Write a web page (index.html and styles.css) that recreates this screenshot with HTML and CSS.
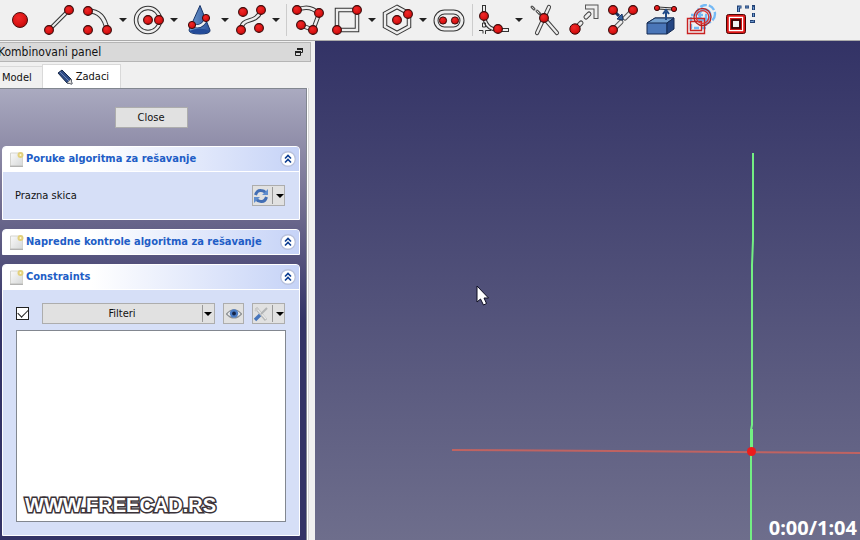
FILE: index.html
```html
<!DOCTYPE html>
<html lang="sr-Latn">
<head>
<meta charset="utf-8">
<meta name="viewport" content="width=device-width, initial-scale=1">
<title>FreeCAD</title>
<link rel="stylesheet" href="styles.css">
</head>
<body>
<svg class="defs" aria-hidden="true">
  <defs>
    <radialGradient id="red" cx=".4" cy=".35" r=".7"><stop offset="0" stop-color="#ef2929"/><stop offset=".6" stop-color="#dd1515"/><stop offset="1" stop-color="#b80808"/></radialGradient>
    <linearGradient id="blue" x1="0" x2="1"><stop offset="0" stop-color="#729fcf"/><stop offset="1" stop-color="#2c529c"/></linearGradient>
    <linearGradient id="paper" x1="0" x2="1" y1="0" y2="1"><stop offset="0" stop-color="#fafafa"/><stop offset="1" stop-color="#d6d8d8"/></linearGradient>
    <g id="dot"><circle r="4.400" fill="url(#red)" stroke="#3c0a0a" stroke-width="1.100"/></g>
    <symbol id="doc" viewBox="0 0 14 15"><path d="M.5 1h12v13H.5z" fill="url(#paper)" stroke="#d5d5d0"/><path d="M0 14.300h13" stroke="#a5a5a5"/><circle cx="10.500" cy="3" r="2" fill="#fff9d8" stroke="#e3d07b" stroke-width="2"/></symbol>
    <symbol id="chevrons" viewBox="0 0 16 16"><circle cx="8" cy="8" r="7.300" fill="#fff" stroke="#b9c2dd" stroke-width="1.400"/><path d="M5 7.500l3-3 3 3M5 11.500l3-3 3 3" fill="none" stroke="#0b3d91" stroke-width="1.600"/></symbol>
    <symbol id="caret" viewBox="0 0 8 4"><path d="M0 0h8L4 4z"/></symbol>
  </defs>
</svg>

<header class="toolbar" role="toolbar" aria-label="Sketcher">
  <button class="tool" aria-label="Point"><svg viewBox="0 0 32 32"><circle cx="16" cy="16" r="7.500" fill="url(#red)" stroke="#4a1010"/></svg></button>
  <button class="tool" aria-label="Line"><svg viewBox="0 0 32 32"><path d="M6 26L26 6" stroke="#333" stroke-width="4"/><path d="M6 26L26 6" stroke="#eee" stroke-width="2"/><use href="#dot" x="6" y="26"/><use href="#dot" x="26" y="6"/></svg></button>
  <button class="tool menu" aria-label="Arc"><svg viewBox="0 0 32 32"><path d="M6 7Q22 7 25 26" fill="none" stroke="#333" stroke-width="5"/><path d="M6 7Q22 7 25 26" fill="none" stroke="#eee" stroke-width="3"/><use href="#dot" x="6" y="7"/><use href="#dot" x="25" y="26"/><use href="#dot" x="6" y="26"/></svg><svg class="caret"><use href="#caret"/></svg></button>
  <button class="tool menu" aria-label="Circle"><svg viewBox="0 0 32 32"><circle cx="15" cy="16" r="12" fill="none" stroke="#333" stroke-width="4.500"/><circle cx="15" cy="16" r="12" fill="none" stroke="#eee" stroke-width="2.500"/><use href="#dot" x="15" y="16"/><use href="#dot" x="26" y="16"/></svg><svg class="caret"><use href="#caret"/></svg></button>
  <button class="tool menu" aria-label="Conic"><svg viewBox="0 0 32 32"><path d="M16 1.500L26 26q1 4-10 4T5 26z" fill="url(#blue)" stroke="#173368"/><path d="M5 27q11-5 21 0-3 3-10 3T5 27z" fill="#234b99"/><path d="M8 21q10 4 14-6" fill="none" stroke="#173368" stroke-width="4"/><path d="M8 21q10 4 14-6" fill="none" stroke="#eee" stroke-width="2.500"/><circle cx="8" cy="21" r="3.600" fill="url(#red)" stroke="#3c0a0a"/><circle cx="22" cy="14" r="3.600" fill="url(#red)" stroke="#3c0a0a"/></svg><svg class="caret"><use href="#caret"/></svg></button>
  <button class="tool menu" aria-label="B-spline"><svg viewBox="0 0 32 32"><path d="M6 26C7 12 20 21 26 7" fill="none" stroke="#333" stroke-width="4.500"/><path d="M6 26C7 12 20 21 26 7" fill="none" stroke="#eee" stroke-width="2.500"/><use href="#dot" x="6" y="26"/><use href="#dot" x="26" y="6"/><use href="#dot" x="8" y="8"/><use href="#dot" x="24" y="24"/></svg><svg class="caret"><use href="#caret"/></svg></button>
  <span class="divider"></span>
  <button class="tool" aria-label="Polyline"><svg viewBox="0 0 32 32"><path d="M5 6Q18 0 27 10L21 26 9 21" fill="none" stroke="#333" stroke-width="4.500"/><path d="M5 6Q18 0 27 10L21 26 9 21" fill="none" stroke="#eee" stroke-width="2.500"/><use href="#dot" x="5" y="6"/><use href="#dot" x="27" y="9"/><use href="#dot" x="21" y="26"/><use href="#dot" x="9" y="21"/></svg></button>
  <button class="tool menu" aria-label="Rectangle"><svg viewBox="0 0 32 32"><path d="M6 6h20v20H6z" fill="none" stroke="#333" stroke-width="4.500"/><path d="M6 6h20v20H6z" fill="none" stroke="#eee" stroke-width="2.500"/><use href="#dot" x="26" y="6"/><use href="#dot" x="6" y="26"/></svg><svg class="caret"><use href="#caret"/></svg></button>
  <button class="tool menu" aria-label="Polygon"><svg viewBox="0 0 32 32"><path d="M15 3l12 6.500v13L15 29 3 22.500v-13z" fill="none" stroke="#333" stroke-width="4.500"/><path d="M15 3l12 6.500v13L15 29 3 22.500v-13z" fill="none" stroke="#eee" stroke-width="2.500"/><use href="#dot" x="15" y="16"/><use href="#dot" x="26" y="10"/></svg><svg class="caret"><use href="#caret"/></svg></button>
  <button class="tool" aria-label="Slot"><svg viewBox="0 0 32 32"><rect x="3" y="8" width="26" height="17" rx="8.500" fill="none" stroke="#333" stroke-width="5"/><rect x="3" y="8" width="26" height="17" rx="8.500" fill="none" stroke="#eee" stroke-width="3"/><circle cx="10" cy="16.500" r="3.600" fill="url(#red)" stroke="#3c0a0a"/><circle cx="22" cy="16.500" r="3.600" fill="url(#red)" stroke="#3c0a0a"/></svg></button>
  <span class="divider"></span>
  <button class="tool menu" aria-label="Fillet"><svg viewBox="0 0 32 32"><path d="M6 1v10Q7 25 20 26h11" fill="none" stroke="#333" stroke-width="4"/><path d="M6 2v9Q7 25 20 26h10" fill="none" stroke="#eee" stroke-width="2"/><path d="M4.500 19v4h3v-4zM1 26.500h4v3M7.500 30v-3.500H13" fill="none" stroke="#333"/><use href="#dot" x="6" y="12"/><use href="#dot" x="20" y="25"/></svg><svg class="caret"><use href="#caret"/></svg></button>
  <button class="tool" aria-label="Trim"><svg viewBox="0 0 32 32"><g fill="none" stroke-linecap="round"><path d="M20 3L8 29M15 14l13 15" stroke="#444" stroke-width="4.200"/><path d="M20 3L8 29M15 14l13 15" stroke="#eee" stroke-width="2.200"/><path d="M3 3l2 2M8 7l3 3" stroke="#555" stroke-width="3"/><path d="M3.500 3.500l1 1M8 7l2 2" stroke="#ddd"/></g><use href="#dot" x="15" y="14"/></svg></button>
  <button class="tool" aria-label="Extend"><svg viewBox="0 0 32 32"><path d="M10 22l3-3M18 13l3-3" stroke="#444" stroke-width="5" stroke-linecap="round"/><path d="M10 22l3-3M18 13l3-3" stroke="#eee" stroke-width="3" stroke-linecap="round"/><path d="M17 3h11v12" fill="none" stroke="#555" stroke-width="5"/><path d="M18 3h10v11" fill="none" stroke="#eee" stroke-width="3"/><circle cx="7" cy="25" r="5.200" fill="url(#red)" stroke="#3c0a0a"/></svg></button>
  <button class="tool" aria-label="Split"><svg viewBox="0 0 32 32"><path d="M6 26l8-8M18 14l8-8" stroke="#555" stroke-width="5" stroke-linecap="round"/><path d="M6 26l8-8M18 14l8-8" stroke="#eee" stroke-width="3" stroke-linecap="round"/><path d="M6 6l6 6" stroke="#183463" stroke-width="3"/><path d="M16 16l-6-1 5-5z" fill="#3465a4" stroke="#183463"/><use href="#dot" x="6" y="26"/><use href="#dot" x="26" y="6"/><use href="#dot" x="6" y="6"/></svg></button>
  <button class="tool" aria-label="External geometry"><svg viewBox="0 0 32 32"><path d="M1 19l8-5h19l-7 5v11H1z" fill="#4a76b8" stroke="#152b52"/><path d="M1 19l8-5h19l-7 5z" fill="#729fcf" stroke="#152b52"/><path d="M21 19l7-5v11l-7 5z" fill="#244682" stroke="#152b52"/><path d="M11 4l17 1" stroke="#333" stroke-width="3"/><path d="M13 4l13 1" stroke="#eee"/><path d="M20 16V8m-3 2l3-4 3 4" fill="none" stroke="#204a87" stroke-width="2"/><circle cx="11" cy="4" r="2.600" fill="url(#red)" stroke="#3c0a0a"/><circle cx="28" cy="5" r="2.600" fill="url(#red)" stroke="#3c0a0a"/></svg></button>
  <button class="tool" aria-label="Carbon copy"><svg viewBox="0 0 32 32"><g fill="none"><g stroke="#74b9f5" stroke-width="2.400"><circle cx="21" cy="10" r="9" stroke-dasharray="7 2"/><circle cx="20" cy="11" r="5.500"/><path d="M6 11h15v13H6z" stroke-dasharray="5 2"/></g><path d="M2.500 14.500h17v15h-17zM5.500 17.500h11v9h-11z" stroke="#c92222" stroke-width="1.400"/><circle cx="17.500" cy="13" r="8.500" stroke="#b62020" stroke-width="1.300"/><circle cx="17.500" cy="13" r="6.300" stroke="#d33" stroke-width="1.300"/></g></svg></button>
  <button class="tool" aria-label="Construction geometry"><svg viewBox="0 0 32 32"><g fill="none"><path d="M14.500 8V3h3M21 3h4M28 2.500h1.500V6M29.500 9v4M29.500 16v1.500H26M22 17.500h-3" stroke="#1f3f73" stroke-width="3"/><path d="M14.500 7.500V3H17M21.500 3h3M28.500 3h1v2.500M29.500 9.500v3M29.500 16.500v1h-3" stroke="#6e9bd0"/></g><rect x="2.500" y="10.500" width="19" height="19" rx="2" fill="#dd1515" stroke="#4a0505"/><path d="M5.500 13.500h13v13h-13z" fill="#fff" stroke="#fff" stroke-width="1.400"/><path d="M7.500 15.500h9v9h-9z" fill="#f0f0f0" stroke="#cf1515" stroke-width="3"/><path d="M8 16h8v8H8z" fill="none" stroke="#200" stroke-width="1.600"/></svg></button>
</header>

<main class="workspace">
  <aside class="dock">
    <div class="dock-title"><h1>Kombinovani panel</h1><button class="float" aria-label="Float panel"><svg viewBox="0 0 8 8"><path d="M2.500 2V.5h5v4H6M.5 3.500h5v4h-5z" fill="none" stroke="#222"/><path d="M2 1h6M0 4h6" stroke="#222" stroke-width="2"/></svg></button></div>
    <nav class="tabs" role="tablist">
      <button class="tab" role="tab" aria-selected="false">Model</button>
      <button class="tab active" role="tab" aria-selected="true"><svg viewBox="0 0 16 16"><path d="M1 4l4-3 9 9 1 5-5-1z" fill="#2f4b83" stroke="#172848"/><path d="M3 3l9 9" stroke="#6d87b8"/><path d="M10 14l4-4 1 5z" fill="#ddd" stroke="#555" stroke-width=".5"/></svg>Zadaci</button>
    </nav>
    <div class="pane">
      <div class="tasks">
        <button class="button close">Close</button>
        <section class="card">
          <header class="card-head"><svg class="doc"><use href="#doc"/></svg><h2>Poruke algoritma za rešavanje</h2><button class="fold" aria-label="Collapse messages"><svg><use href="#chevrons"/></svg></button></header>
          <div class="card-body message">
            <p>Prazna skica</p>
            <button class="button split" aria-label="Refresh"><svg class="glyph" viewBox="0 0 16 16"><g fill="none" stroke="#426eb5" stroke-width="3"><path d="M2.500 7Q4 2 8 2.500q3 0 5 2.500"/><path d="M13.500 9Q12 14 8 13.500 5 13.500 3 11"/></g><path d="M15 1v6H9zM1 15V9h6z" fill="#5f8dce"/></svg><span class="rule"></span><svg class="caret"><use href="#caret"/></svg></button>
          </div>
        </section>
        <section class="card">
          <header class="card-head"><svg class="doc"><use href="#doc"/></svg><h2>Napredne kontrole algoritma za rešavanje</h2><button class="fold" aria-label="Collapse advanced controls"><svg><use href="#chevrons"/></svg></button></header>
        </section>
        <section class="card grow">
          <header class="card-head"><svg class="doc"><use href="#doc"/></svg><h2>Constraints</h2><button class="fold" aria-label="Collapse constraints"><svg><use href="#chevrons"/></svg></button></header>
          <div class="card-body constraints">
            <div class="filters">
              <input class="check" type="checkbox" checked aria-label="Enable filters">
              <div class="picker"><select aria-label="Filteri"><option>Filteri</option></select><span class="rule"></span><svg class="caret"><use href="#caret"/></svg></div>
              <button class="button eye" aria-label="Visibility"><svg class="glyph" viewBox="0 0 16 16"><path d="M.5 8Q8-.5 15.500 8 8 16 .5 8z" fill="#eee" stroke="#8b8f92" stroke-width="1.200"/><circle cx="8" cy="7.500" r="4.200" fill="#4b7cc4"/><circle cx="8" cy="7.500" r="1.900" fill="#152446"/></svg></button>
              <button class="button split" aria-label="Settings"><svg class="glyph" viewBox="0 0 16 16"><path d="M3 2l10 12" stroke="#b4b6b6" stroke-width="3"/><path d="M4 3l9 10" stroke="#e8e8e8" stroke-width="1.400"/><path d="M14 2L8 8" stroke="#b2b4b5" stroke-width="2"/><path d="M7 9l-5 5" stroke="#4775bb" stroke-width="3.400"/><path d="M2 5l3-3" stroke="#ccc" stroke-width="2"/></svg><span class="rule"></span><svg class="caret"><use href="#caret"/></svg></button>
            </div>
            <div class="list" role="list" aria-label="Constraints"><span class="watermark">WWW.FREECAD.RS</span></div>
          </div>
        </section>
      </div>
    </div>
  </aside>
  <section class="view" aria-label="3D view">
    <svg class="scene" viewBox="0 0 545 499" preserveAspectRatio="xMaxYMax slice">
      <path d="M137 409l163 1 245 2" fill="none" stroke="#bf6362" stroke-width="2"/>
      <path d="M438 112v87l-1 25v160l-1 5v110" fill="none" stroke="#73ef83" stroke-width="2"/>
      <path d="M436.500 388v25" stroke="#73ef83" stroke-width="3"/>
      <circle cx="436.500" cy="410.500" r="4.500" fill="#ec1c1c"/>
      <path d="M162 245v16l3.500-3 3 6 3-1.500-2.500-5.500h4.500z" fill="#fff" stroke="#0c0c20"/>
    </svg>
    <time class="clock">0:00/1:04</time>
  </section>
</main>
</body>
</html>
```
FILE: styles.css
```css
* { box-sizing: border-box; }
body {
  margin: 0;
  height: 100vh;
  display: flex;
  flex-direction: column;
  overflow: hidden;
  background: #f0f0f0;
  color: #111;
  font: 11px/16px "DejaVu Sans Condensed", "Noto Sans", sans-serif;
}
button, select { font: inherit; color: inherit; margin: 0; padding: 0; border: 0; background: none; }
svg { display: block; flex: none; }
h1, h2, p { margin: 0; font-size: 11px; font-weight: 400; }
.defs { position: absolute; width: 0; height: 0; }
.caret { width: 8px; height: 4px; }

.toolbar {
  flex: none;
  display: flex;
  align-items: center;
  height: 41px;
  padding-left: 4px;
  border-bottom: 1px solid #aaa;
}
.tool { flex: none; display: flex; align-items: center; gap: 5px; padding-right: 7px; }
.tool.menu { padding-right: 6px; }
.tool > svg:first-child { width: 32px; height: 32px; }
.tool .caret { fill: #222; }
.divider { flex: none; width: 1px; height: 32px; margin-right: 5px; background: #ccc; }

.workspace { flex: 1; min-height: 0; display: flex; }
.dock { flex: none; width: 315px; display: flex; flex-direction: column; padding-top: 1px; }
.dock-title {
  display: flex;
  justify-content: space-between;
  align-items: center;
  height: 20px;
  margin-right: 4px;
  padding-right: 7px;
  background: #d9d9d9;
  border: 1px solid #b5b5b5;
  border-left: 0;
}
.dock-title h1 { margin-left: -2px; font-size: 12px; }
.float svg { width: 8px; height: 8px; }
.tabs { display: flex; align-items: flex-end; height: 26px; padding-top: 2px; }
.tab {
  display: flex;
  align-items: center;
  height: 22px;
  padding: 0 10px 0 2px;
  border-top: 1px solid #d9d9d9;
}
.tab.active { height: 24px; gap: 3px; padding: 0 11px 0 14px; background: #fff; border: 1px solid #d9d9d9; border-bottom: 0; }
.tab svg { width: 16px; height: 16px; }
.pane {
  flex: 1;
  min-height: 0;
  display: flex;
  margin-right: 6px;
  border-right: 1px solid #d5d5d5;
  background: #fff;
}
.tasks {
  flex: 1;
  min-width: 0;
  display: flex;
  flex-direction: column;
  gap: 9px;
  margin-right: 1px;
  padding: 18px 6px 4px 2px;
  border-top: 1px solid #828790;
  border-right: 1px solid #828790;
  background: linear-gradient(#aaaac0, #7c7898 96px, #333366 232px);
}
.button {
  display: flex;
  align-items: center;
  justify-content: center;
  height: 21px;
  background: #e1e1e1;
  border: 1px solid #adadad;
}
.close { width: 73px; align-self: center; margin-bottom: 9px; }
.card { display: flex; flex-direction: column; border: 1px solid #fff; border-radius: 4px 4px 0 0; background: #d6dff7; }
.grow { flex: 1; }
.card-head {
  display: flex;
  align-items: center;
  gap: 2px;
  height: 24px;
  padding: 0 3px 0 7px;
  border-radius: 3px 3px 0 0;
  background: linear-gradient(90deg, #fff 30%, #c6d3f7);
}
.card-head h2 { flex: 1; color: #215dc6; font-weight: 700; white-space: nowrap; }
.doc { width: 14px; height: 15px; }
.fold svg { width: 16px; height: 16px; }
.card-body { border-top: 1px solid #fff; }
.message { display: flex; align-items: center; justify-content: space-between; height: 48px; padding: 0 14px 0 12px; }
.split { width: 33px; gap: 2px; }
.rule { width: 1px; align-self: stretch; margin: 1px; background: #999; }
.glyph { width: 16px; height: 16px; }
.constraints { flex: 1; display: flex; flex-direction: column; gap: 6px; padding: 13px; }
.filters { display: flex; align-items: center; gap: 8px; padding-right: 1px; }
.check {
  appearance: none;
  flex: none;
  width: 13px;
  height: 13px;
  margin: 0 5px 0 0;
  background: #fff;
  border: 1px solid #222;
  display: grid;
  place-items: center;
}
.check:checked::after { content: ""; width: 9px; height: 5px; margin-bottom: 3px; border: solid #222; border-width: 0 0 1px 1px; transform: rotate(-45deg); }
.picker { flex: 1; display: flex; align-items: center; height: 21px; padding-right: 2px; background: #e1e1e1; border: 1px solid #adadad; }
.picker select { flex: 1; appearance: none; text-align-last: center; }
.eye { width: 21px; }
.list { flex: 1; display: flex; align-items: flex-end; padding: 4px 8px; background: #fff; border: 1px solid #828790; }
.watermark {
  color: #fff;
  font: 700 20px/24px "Liberation Sans", sans-serif;
  -webkit-text-stroke: 3px #3a3238;
  paint-order: stroke fill;
}

.view { flex: 1; min-width: 0; position: relative; background: linear-gradient(#333366, #6e6e8c); }
.scene { position: absolute; inset: 0; width: 100%; height: 100%; }
.clock { position: absolute; right: 3px; bottom: 0; color: #fff; font: 700 20px/24px "Noto Sans", sans-serif; }
```
